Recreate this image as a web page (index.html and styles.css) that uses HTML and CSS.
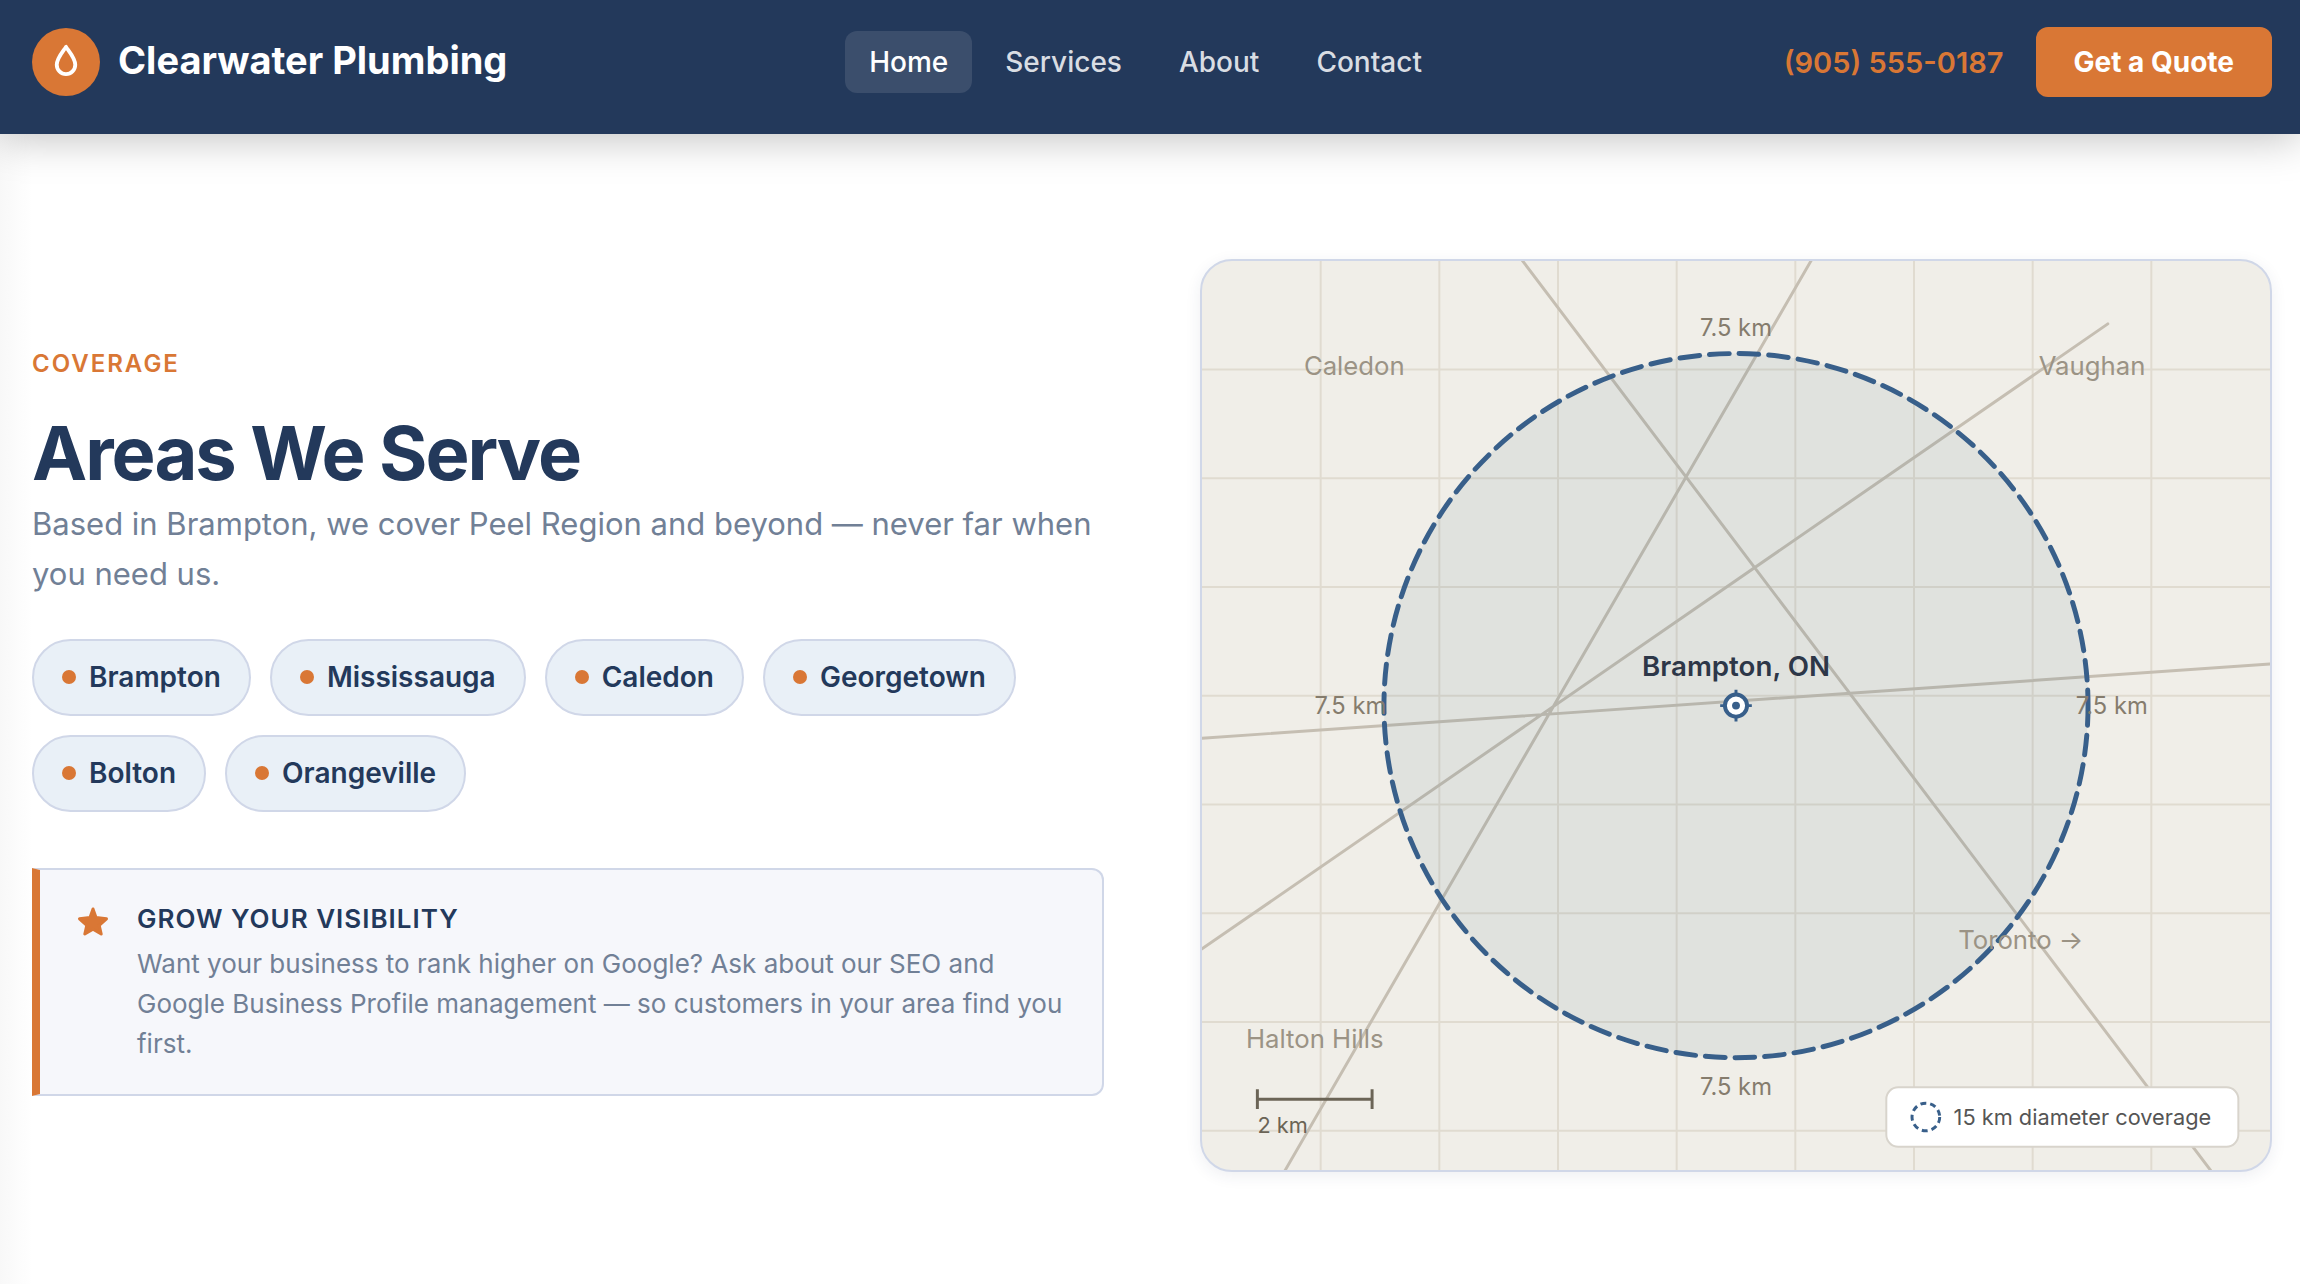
FILE: index.html
```html
<!DOCTYPE html>
<html lang="en">
<head>
<meta charset="utf-8">
<meta name="viewport" content="width=device-width, initial-scale=1">
<title>Clearwater Plumbing</title>
<link rel="stylesheet" href="styles.css">
</head>
<body>
<header class="site-header">
  <a class="brand" href="#">
    <span class="brand-mark">
      <svg viewBox="0 0 24 24" width="40" height="40" aria-hidden="true"><path d="M12 2.900C10.800 5 6.450 9.500 6.450 13.700a5.550 5.600 0 0 0 11.100 0C17.550 9.500 13.200 5 12 2.900Z"/></svg>
    </span>
    <span class="brand-name">Clearwater Plumbing</span>
  </a>
  <nav class="site-nav">
    <a class="nav-link is-active" href="#">Home</a>
    <a class="nav-link" href="#">Services</a>
    <a class="nav-link" href="#">About</a>
    <a class="nav-link" href="#">Contact</a>
  </nav>
  <div class="header-actions">
    <a class="phone" href="tel:+19055550187">(905) 555-0187</a>
    <button class="quote" type="button">Get a Quote</button>
  </div>
</header>
<main class="areas">
  <section class="areas-text">
    <p class="eyebrow">Coverage</p>
    <h1 class="title">Areas We Serve</h1>
    <p class="lead">Based in Brampton, we cover Peel Region and beyond — never far when you need us.</p>
    <ul class="cities">
      <li class="city">Brampton</li>
      <li class="city">Mississauga</li>
      <li class="city">Caledon</li>
      <li class="city">Georgetown</li>
      <li class="city">Bolton</li>
      <li class="city">Orangeville</li>
    </ul>
    <aside class="promo">
      <svg class="promo-star" viewBox="0 0 32 32" width="32" height="32" aria-hidden="true"><path d="M16 4L19 12.500 29.500 13.800 22.200 20.300 24.200 29 16 24.300 7.800 29 9.800 20.300 2.500 13.800 13 12.500Z"/></svg>
      <div>
        <h2 class="promo-title">Grow your visibility</h2>
        <p class="promo-text">Want your business to rank higher on Google? Ask about our SEO and Google Business Profile management — so customers in your area find you first.</p>
      </div>
    </aside>
  </section>
  <figure class="map">
    <svg class="map-art" viewBox="0 0 540 460" preserveAspectRatio="xMidYMid slice" role="img" aria-label="Coverage map around Brampton">
      <path class="grid" d="M60 0V460M120 0V460M180 0V460M240 0V460M300 0V460M360 0V460M420 0V460M480 0V460M0 55H540M0 110H540M0 165H540M0 220H540M0 275H540M0 330H540M0 385H540M0 440H540"/>
      <path class="road" d="M162 0L510 460M308 0L42 460M0 348L458 32M0 241.500L540 204"/>
      <circle class="zone" cx="270" cy="225" r="178"/>
      <g class="marker">
        <path d="M270 217v16M262 225h16"/>
        <circle class="marker-ring" cx="270" cy="225" r="5.600"/>
        <circle class="marker-dot" cx="270" cy="225" r="2"/>
      </g>
      <text class="home-label" x="270" y="210">Brampton, ON</text>
      <g class="distance">
        <text x="270" y="38">7.5 km</text>
        <text x="270" y="422">7.5 km</text>
        <text x="75" y="229">7.5 km</text>
        <text x="460" y="229">7.5 km</text>
      </g>
      <g class="place">
        <text x="77" y="58">Caledon</text>
        <text x="450" y="58">Vaughan</text>
        <text x="414" y="348">Toronto →</text>
        <text x="57" y="398">Halton Hills</text>
      </g>
      <path class="scale-bar" d="M28 424H86M28 419V429M86 419V429"/>
      <text class="scale-text" x="28" y="441">2 km</text>
      <rect class="legend-box" x="346" y="418" width="178" height="30" rx="6"/>
      <circle class="legend-ring" cx="366" cy="433" r="7"/>
      <text class="legend-text" x="380" y="437">15 km diameter coverage</text>
    </svg>
  </figure>
</main>
</body>
</html>
```
FILE: styles.css
```css
* { box-sizing: border-box; }
body {
  margin: 0;
  font-family: Inter, "Open Sans", sans-serif;
  color: #23395b;
  background: #fff linear-gradient(to right, #f8f8f8, #fff 32px) no-repeat;
}
h1, h2, p, ul, figure { margin: 0; padding: 0; }

.site-header {
  display: flex;
  justify-content: space-between;
  align-items: center;
  min-height: 134px;
  padding: 0 28px 10px 32px;
  background: #23395b;
  box-shadow: 0 4px 40px rgba(0, 0, 0, .25);
}
.brand { display: flex; align-items: center; gap: 18px; color: #fff; text-decoration: none; }
.brand-mark {
  display: grid; place-items: center;
  width: 68px; height: 68px; border-radius: 50%;
  background: #d97735;
}
.brand-mark path { fill: none; stroke: #fff; stroke-width: 2.3; stroke-linejoin: round; }
.brand-name { font-size: 38px; font-weight: 700; line-height: 44px; padding-bottom: 4px; }
.site-nav { display: flex; gap: 9px; }
.nav-link {
  padding: 0 24px; border-radius: 12px;
  font-size: 28px; font-weight: 500; line-height: 62px;
  color: #d9dde3; text-decoration: none;
}
.nav-link.is-active { background: #3b4e6c; color: #fff; }
.header-actions { display: flex; justify-content: flex-end; align-items: center; gap: 32px; }
.phone { color: #d97735; font-size: 29px; font-weight: 600; text-decoration: none; }
.quote {
  height: 70px; padding: 0 38px; border: 0; border-radius: 12px;
  background: #d97735; color: #fff;
  font: 700 28px Inter, sans-serif;
}

.areas {
  display: grid;
  grid-template-columns: 1fr 1fr;
  gap: 96px;
  align-items: center;
  padding: 125px 28px 113px 32px;
}
.areas-text { padding-top: 8px; }
.eyebrow {
  font-size: 24px; font-weight: 600; line-height: 40px; letter-spacing: 2px;
  text-transform: uppercase; color: #d97735; margin-bottom: 23px;
}
.title { font-size: 74px; font-weight: 700; line-height: 92px; letter-spacing: -2px; }
.lead { font-size: 31px; line-height: 50px; color: #718096; }
.cities { display: flex; flex-wrap: wrap; gap: 19px; margin: 40px 0 56px; list-style: none; }
.city {
  display: flex; align-items: center; gap: 13px;
  height: 77px; padding: 0 28px;
  border: 2px solid #d0d7e8; border-radius: 40px;
  background: #e9f0f7; font-size: 28px; font-weight: 600;
}
.city::before { content: ""; width: 14px; height: 14px; border-radius: 50%; background: #d97735; }
.promo {
  display: flex; gap: 28px;
  padding: 24px 36px 30px 37px;
  border: 2px solid #d0d7e8; border-left: 8px solid #d97735;
  border-radius: 0 12px 12px 0;
  background: #f6f7fb;
}
.promo-star { flex: none; margin-top: 11px; fill: #d97735; stroke: #d97735; stroke-width: 3; stroke-linejoin: round; }
.promo-title { font-size: 26px; font-weight: 600; line-height: 50px; letter-spacing: 1px; text-transform: uppercase; }
.promo-text { font-size: 26px; line-height: 40px; color: #718096; }

.map {
  overflow: hidden;
  border: 2px solid #d0d7e8; border-radius: 32px;
  background: #f0eee8;
  box-shadow: 0 4px 16px rgba(35, 57, 91, .08);
}
.map-art { display: block; width: 100%; aspect-ratio: 1068 / 909; }
.grid { fill: none; stroke: #e0dbd0; stroke-width: 1; }
.road { fill: none; stroke: #c5beb2; stroke-width: 1.5; stroke-linecap: round; }
.zone { fill: rgba(40, 90, 110, .08); stroke: #385f8a; stroke-width: 2.5; stroke-dasharray: 10 5; stroke-linecap: round; }
.marker { fill: none; stroke: #385f8a; stroke-width: 1.5; }
.marker-ring { fill: #fff; stroke-width: 2; }
.marker-dot { fill: #385f8a; stroke: none; }
.home-label { font-size: 14px; font-weight: 600; fill: #2d3748; text-anchor: middle; }
.distance { font-size: 12px; fill: #857c6d; text-anchor: middle; }
.place { font-size: 13px; fill: #9b9385; text-anchor: middle; }
.scale-bar { fill: none; stroke: #6b6456; stroke-width: 1.5; }
.scale-text { font-size: 11px; fill: #6b6456; }
.legend-box { fill: #fff; stroke: #d8d4cc; }
.legend-ring { fill: none; stroke: #385f8a; stroke-width: 1.5; stroke-dasharray: 3 2; }
.legend-text { font-size: 11px; fill: #555; }
```
